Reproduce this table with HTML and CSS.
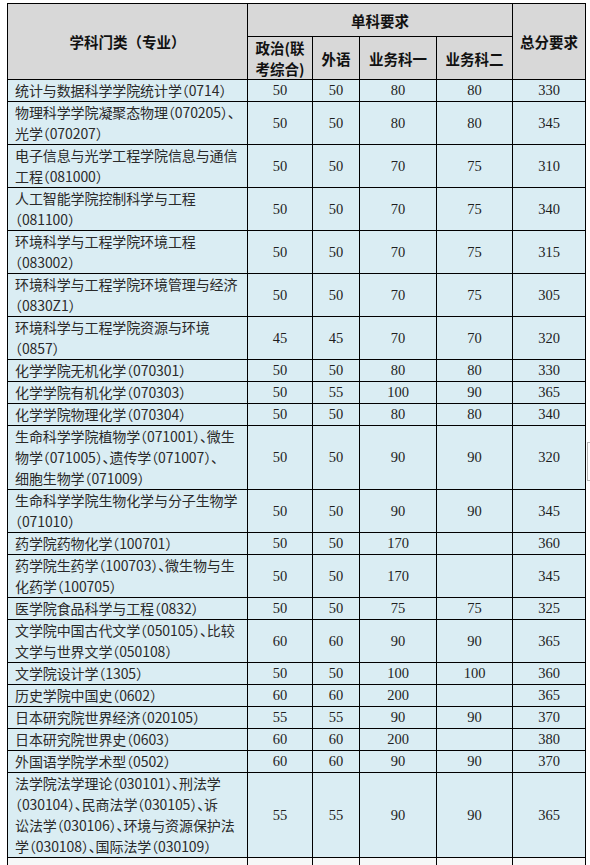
FILE: index.html
```html
<!DOCTYPE html>
<html lang="zh">
<head>
<meta charset="utf-8">
<link rel="stylesheet" href="styles.css">
<title>复试分数线</title>
</head>
<body>
<div class="wrap">
<table class="score">
<colgroup>
<col class="c-name"><col class="c-zz"><col class="c-wy"><col class="c-y1"><col class="c-y2"><col class="c-total">
</colgroup>
<thead>
<tr class="h1">
<th rowspan="2" class="th-name">学科门类（专业）</th>
<th colspan="4">单科要求</th>
<th rowspan="2">总分要求</th>
</tr>
<tr class="h2">
<th>政治(联<br>考综合)</th>
<th>外语</th>
<th>业务科一</th>
<th>业务科二</th>
</tr>
</thead>
<tbody>
<tr><td class="name">统计与数据科学学院统计学（0714）</td><td>50</td><td>50</td><td>80</td><td>80</td><td>330</td></tr>
<tr><td class="name">物理科学学院凝聚态物理（070205）、<br>光学（070207）</td><td>50</td><td>50</td><td>80</td><td>80</td><td>345</td></tr>
<tr><td class="name">电子信息与光学工程学院信息与通信<br>工程（081000）</td><td>50</td><td>50</td><td>70</td><td>75</td><td>310</td></tr>
<tr><td class="name">人工智能学院控制科学与工程<br>（081100）</td><td>50</td><td>50</td><td>70</td><td>75</td><td>340</td></tr>
<tr><td class="name">环境科学与工程学院环境工程<br>（083002）</td><td>50</td><td>50</td><td>70</td><td>75</td><td>315</td></tr>
<tr><td class="name">环境科学与工程学院环境管理与经济<br>（0830Z1）</td><td>50</td><td>50</td><td>70</td><td>75</td><td>305</td></tr>
<tr><td class="name">环境科学与工程学院资源与环境<br>（0857）</td><td>45</td><td>45</td><td>70</td><td>70</td><td>320</td></tr>
<tr><td class="name">化学学院无机化学（070301）</td><td>50</td><td>50</td><td>80</td><td>80</td><td>330</td></tr>
<tr><td class="name">化学学院有机化学（070303）</td><td>50</td><td>55</td><td>100</td><td>90</td><td>365</td></tr>
<tr><td class="name">化学学院物理化学（070304）</td><td>50</td><td>50</td><td>80</td><td>80</td><td>340</td></tr>
<tr><td class="name">生命科学学院植物学（071001）、微生<br>物学（071005）、遗传学（071007）、<br>细胞生物学（071009）</td><td>50</td><td>50</td><td>90</td><td>90</td><td>320</td></tr>
<tr><td class="name">生命科学学院生物化学与分子生物学<br>（071010）</td><td>50</td><td>50</td><td>90</td><td>90</td><td>345</td></tr>
<tr><td class="name">药学院药物化学（100701）</td><td>50</td><td>50</td><td>170</td><td></td><td>360</td></tr>
<tr><td class="name">药学院生药学（100703）、微生物与生<br>化药学（100705）</td><td>50</td><td>50</td><td>170</td><td></td><td>345</td></tr>
<tr><td class="name">医学院食品科学与工程（0832）</td><td>50</td><td>50</td><td>75</td><td>75</td><td>325</td></tr>
<tr><td class="name">文学院中国古代文学（050105）、比较<br>文学与世界文学（050108）</td><td>60</td><td>60</td><td>90</td><td>90</td><td>365</td></tr>
<tr><td class="name">文学院设计学（1305）</td><td>50</td><td>50</td><td>100</td><td>100</td><td>360</td></tr>
<tr><td class="name">历史学院中国史（0602）</td><td>60</td><td>60</td><td>200</td><td></td><td>365</td></tr>
<tr><td class="name">日本研究院世界经济（020105）</td><td>55</td><td>55</td><td>90</td><td>90</td><td>370</td></tr>
<tr><td class="name">日本研究院世界史（0603）</td><td>60</td><td>60</td><td>200</td><td></td><td>380</td></tr>
<tr><td class="name">外国语学院学术型（0502）</td><td>60</td><td>60</td><td>90</td><td>90</td><td>370</td></tr>
<tr><td class="name">法学院法学理论（030101）、刑法学<br>（030104）、民商法学（030105）、诉<br>讼法学（030106）、环境与资源保护法<br>学（030108）、国际法学（030109）</td><td>55</td><td>55</td><td>90</td><td>90</td><td>365</td></tr>
<tr class="tail"><td class="name"></td><td></td><td></td><td></td><td></td><td></td></tr>
</tbody>
</table>
<div class="edge-mark"></div>
</div>
</body>
</html>
```
FILE: styles.css
```css
html, body {
  margin: 0;
  padding: 0;
  background: #ffffff;
}
.wrap {
  position: relative;
  padding: 3px 0 0 7px;
  width: 583px;
  height: 862px;
  overflow: hidden;
}
.score {
  border-collapse: collapse;
  table-layout: fixed;
  width: 578px;
  font-family: "Noto Sans CJK SC", sans-serif;
  font-size: 14px;
  color: #1e1e1e;
}
.c-name { width: 240px; }
.c-zz { width: 65px; }
.c-wy { width: 47px; }
.c-y1 { width: 77px; }
.c-y2 { width: 76px; }
.c-total { width: 73px; }

.score th, .score td {
  border: 1px solid #000;
  padding: 0;
  line-height: 21px;
  text-align: center;
  vertical-align: middle;
}
.score th {
  background: #d8d8d8;
  font-weight: bold;
  font-size: 14.5px;
  color: #111;
}
.h1 th { height: 32px; }
.h2 th { height: 42px; }
.score td {
  background: #daedf3;
  font-family: "Liberation Serif", "Noto Sans CJK SC", serif;
  font-size: 14.5px;
}
.score td.name {
  text-align: left;
  padding: 0 0 0 7px;
  white-space: nowrap;
  font-family: "Noto Sans CJK SC", sans-serif;
  font-size: 14px;
  line-height: 21px;
  letter-spacing: -0.1px;
  font-feature-settings: "halt";
  color: #2a2a2a;
}
.tail td {
  background: #f6f7f7;
  height: 30px;
}
.edge-mark {
  position: absolute;
  left: 587px;
  top: 442px;
  width: 6px;
  height: 37px;
  border-left: 1px solid #b8b8b8;
  border-top: 1px solid #b8b8b8;
  border-bottom: 1px solid #b8b8b8;
}
```
